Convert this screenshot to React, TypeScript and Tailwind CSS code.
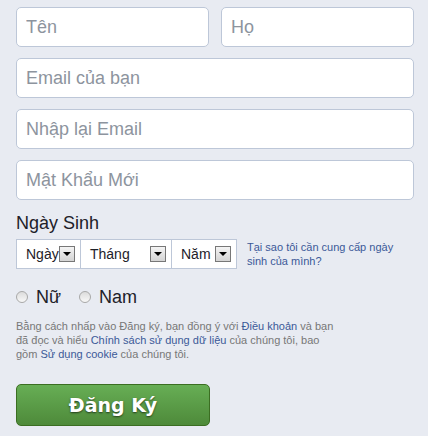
import React, { useState } from 'react';

const font = "font-['Liberation_Sans',Arial,sans-serif]";

function TextField({ placeholder }: { placeholder: string }) {
  return (
    <input
      type="text"
      placeholder={placeholder}
      className={`h-10 w-full rounded-[5px] border border-[#bdc7d8] bg-white px-[9px] text-[18px] text-[#1d2129] outline-none placeholder:text-[#8d949e] ${font}`}
    />
  );
}

function Arrow() {
  return (
    <span className="flex h-4 w-4 shrink-0 items-center justify-center border border-[#777] bg-gradient-to-b from-[#f4f4f4] to-[#d4d4d4]">
      <span className="h-0 w-0 border-x-[4px] border-t-[4px] border-x-transparent border-t-black" />
    </span>
  );
}

function DateSelect({ label, width }: { label: string; width: string }) {
  return (
    <div className={`flex h-[30px] items-center justify-between border border-[#bdc7d8] bg-white pl-[9px] pr-[5px] ${width}`}>
      <span className="text-[14px] text-[#1d2129]">{label}</span>
      <Arrow />
    </div>
  );
}

function Radio({ label, checked, onClick }: { label: string; checked: boolean; onClick: () => void }) {
  return (
    <label className="flex cursor-pointer items-center gap-[8px]" onClick={onClick}>
      <span className="flex h-[12px] w-[12px] items-center justify-center rounded-full border border-[#a8a8a8] bg-gradient-to-b from-[#dcdcdc] to-[#f8f8f8]">
        {checked && <span className="h-[5px] w-[5px] rounded-full bg-[#333]" />}
      </span>
      <span className="text-[18px] leading-[22px] text-[#1d2129]">{label}</span>
    </label>
  );
}

export default function App() {
  const [gender, setGender] = useState('');

  return (
    <div className={`h-[436px] w-[428px] bg-[#e8ebf2] pl-4 pr-[14px] pt-[7px] ${font}`}>
      {/* Name row */}
      <div className="flex gap-3">
        <TextField placeholder="Tên" />
        <TextField placeholder="Họ" />
      </div>

      <div className="mt-[11px] flex flex-col gap-[11px]">
        <TextField placeholder="Email của bạn" />
        <TextField placeholder="Nhập lại Email" />
        <TextField placeholder="Mật Khẩu Mới" />
      </div>

      {/* Birthday */}
      <div className="mt-[12px] text-[18px] leading-[22px] text-[#1d2129]">Ngày Sinh</div>
      <div className="mt-[5px] flex items-start">
        <div className="flex">
          <DateSelect label="Ngày" width="w-[65px]" />
          <DateSelect label="Tháng" width="-ml-px w-[92px]" />
          <DateSelect label="Năm" width="-ml-px w-[66px]" />
        </div>
        <a className="ml-[10px] mt-[1px] w-[150px] text-[11px] leading-[14px] text-[#3b5998]">
          Tại sao tôi cần cung cấp ngày sinh của mình?
        </a>
      </div>

      {/* Gender */}
      <div className="mt-[17px] flex gap-[18px]">
        <Radio label="Nữ" checked={gender === 'f'} onClick={() => setGender('f')} />
        <Radio label="Nam" checked={gender === 'm'} onClick={() => setGender('m')} />
      </div>

      {/* Terms */}
      <p className="mt-[11px] w-[320px] text-[11px] leading-[14px] text-[#777]">
        Bằng cách nhấp vào Đăng ký, bạn đồng ý với <a className="text-[#3b5998]">Điều khoản</a> và bạn
        đã đọc và hiểu <a className="text-[#3b5998]">Chính sách sử dụng dữ liệu</a> của chúng tôi, bao
        gồm <a className="text-[#3b5998]">Sử dụng cookie</a> của chúng tôi.
      </p>

      <button className="mt-[23px] flex h-[42px] w-[194px] items-center justify-center rounded-[5px] border border-[#3b6e22] bg-gradient-to-b from-[#67ae55] to-[#4e8a3a] font-['DejaVu_Sans',Verdana,sans-serif] text-[19px] font-bold text-white [text-shadow:0_1px_2px_rgba(0,0,0,0.6)]">
        Đăng Ký
      </button>
    </div>
  );
}
